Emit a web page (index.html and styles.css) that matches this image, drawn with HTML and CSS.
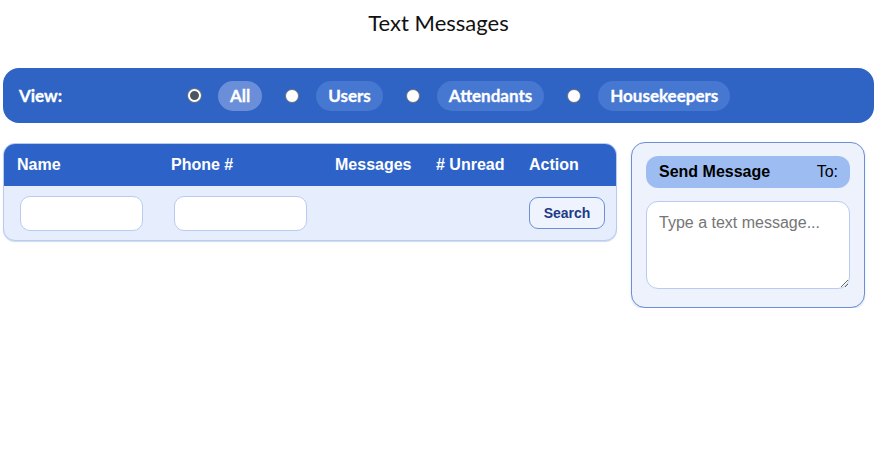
FILE: index.html
```html
<!DOCTYPE html>
<html>
<head>
<meta charset="utf-8">
<link rel="stylesheet" href="styles.css">
</head>
<body>
<h1 class="title">Text Messages</h1>
<nav class="viewbar">
  <span class="view-label">View:</span>
  <div class="options">
    <label class="opt"><span class="radio checked"></span><span class="pill active">All</span></label>
    <label class="opt"><span class="radio"></span><span class="pill">Users</span></label>
    <label class="opt"><span class="radio"></span><span class="pill">Attendants</span></label>
    <label class="opt"><span class="radio"></span><span class="pill">Housekeepers</span></label>
  </div>
</nav>
<div class="main">
  <div class="table">
    <div class="row head">
      <div class="cell">Name</div>
      <div class="cell">Phone #</div>
      <div class="cell">Messages</div>
      <div class="cell"># Unread</div>
      <div class="cell">Action</div>
    </div>
    <div class="row body">
      <div class="cell in"><input class="field name-field" type="text"></div>
      <div class="cell in"><input class="field phone-field" type="text"></div>
      <div class="cell"></div>
      <div class="cell"></div>
      <div class="cell"><button class="search">Search</button></div>
    </div>
  </div>
  <div class="send">
    <div class="send-head"><span class="send-title">Send Message</span><span class="to">To:</span></div>
    <textarea class="msg" placeholder="Type a text message..."></textarea>
  </div>
</div>
</body>
</html>
```
FILE: styles.css
```css
* { box-sizing: border-box; }
body {
  margin: 0;
  padding: 0 15px 0 3px;
  font-family: "Liberation Sans", Arial, sans-serif;
  background: #fff;
}
.title {
  margin: 0;
  padding-top: 9px;
  height: 68px;
  text-align: center;
  font-family: Lato, sans-serif;
  font-weight: 400;
  font-size: 22px;
  color: #111;
}
.viewbar {
  height: 55px;
  background: #2f64c5;
  border-radius: 16px;
  display: flex;
  align-items: center;
  padding-left: 16px;
  font-family: Lato, sans-serif;
  font-weight: 700;
  color: #fff;
}
.view-label {
  font-size: 17px;
  width: 169px;
  -webkit-text-stroke: 0.3px #fff;
}
.options {
  display: flex;
  align-items: center;
  gap: 23px;
}
.opt {
  display: flex;
  align-items: center;
  gap: 17px;
}
.radio {
  width: 14px;
  height: 14px;
  border-radius: 50%;
  background: #fff;
  border: 1px solid #6b7280;
}
.radio.checked {
  background: #4b5563;
  border: 2px solid #fff;
  box-shadow: 0 0 0 1px #6b7280;
  width: 13px;
  height: 13px;
}
.pill {
  height: 30px;
  line-height: 30px;
  padding: 0 12px;
  border-radius: 15px;
  background: #4677d1;
  font-size: 17px;
  -webkit-text-stroke: 0.3px #fff;
}
.pill.active { background: #6a8fd8; }
.main {
  margin-top: 20px;
  display: flex;
  align-items: flex-start;
}
.table {
  width: 614px;
  border: 1px solid #b9cbf1;
  border-radius: 12px;
  overflow: hidden;
  background: #e6edfc;
  box-shadow: 0 1px 1px rgba(100,130,200,0.3);
}
.row {
  display: grid;
  grid-template-columns: 154px 164px 101px 93px 1fr;
  align-items: center;
}
.head {
  background: #2d63c8;
  height: 43px;
  color: #fff;
  font-weight: 700;
  font-size: 16px;
  margin-top: -1px;
}
.head .cell { padding-left: 13px; }
.body { height: 54px; }
.body .cell { padding-left: 13px; }
.body .cell.in { padding-left: 16px; }
.field {
  height: 35px;
  border: 1px solid #b9cbf1;
  border-radius: 10px;
  background: #fff;
  outline: none;
  display: block;
}
.name-field { width: 123px; }
.phone-field { width: 133px; }
.search {
  width: 76px;
  height: 32px;
  border: 1px solid #6d8fd6;
  border-radius: 9px;
  background: #eef3fd;
  color: #1e3a8a;
  font-family: "Liberation Sans", Arial, sans-serif;
  font-weight: 700;
  font-size: 14px;
  display: block;
}
.send {
  margin-left: 14px;
  width: 234px;
  height: 166px;
  margin-top: -1px;
  border: 1px solid #6d8fd6;
  border-radius: 14px;
  background: #edf2fd;
  padding: 13px 14px;
  box-shadow: 0 1px 2px rgba(100,130,200,0.3);
}
.send-head {
  height: 32px;
  background: #9dbcf2;
  border-radius: 12px;
  display: flex;
  align-items: center;
  justify-content: space-between;
  padding: 0 12px 0 13px;
  font-size: 16px;
  color: #000;
}
.send-title { font-weight: 700; }
.msg {
  display: block;
  margin-top: 13px;
  width: 204px;
  height: 88px;
  border: 1px solid #b9cbf1;
  border-radius: 12px;
  background: #fff;
  padding: 12px 12px;
  font-family: "Liberation Sans", Arial, sans-serif;
  font-size: 16px;
  outline: none;
}
.msg::placeholder { color: #757575; }
```
